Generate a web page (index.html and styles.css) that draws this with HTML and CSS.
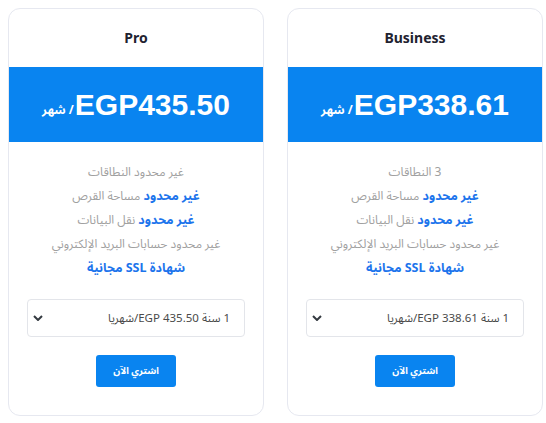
FILE: index.html
```html
<!DOCTYPE html>
<html lang="ar" dir="rtl">
<head>
<meta charset="utf-8">
<link rel="stylesheet" href="styles.css">
</head>
<body>
<div class="plans">
  <div class="card">
    <div class="card-head">Business</div>
    <div class="price"><span class="amount">EGP338.61</span><span class="per">/ شهر</span></div>
    <ul class="features">
      <li>3 النطاقات</li>
      <li><b>غير محدود</b> مساحة القرص</li>
      <li><b>غير محدود</b> نقل البيانات</li>
      <li>غير محدود حسابات البريد الإلكتروني</li>
      <li><b>شهادة SSL مجانية</b></li>
    </ul>
    <div class="select-wrap">
      <div class="select"><span>1 سنة EGP 338.61/شهريا</span>
        <svg class="chev" viewBox="0 0 10 6" width="10" height="6"><path d="M1 1l4 4 4-4" fill="none" stroke="#343a40" stroke-width="2"/></svg>
      </div>
    </div>
    <div class="btn-wrap"><button class="buy">اشتري الآن</button></div>
  </div>
  <div class="card">
    <div class="card-head">Pro</div>
    <div class="price"><span class="amount">EGP435.50</span><span class="per">/ شهر</span></div>
    <ul class="features">
      <li>غير محدود النطاقات</li>
      <li><b>غير محدود</b> مساحة القرص</li>
      <li><b>غير محدود</b> نقل البيانات</li>
      <li>غير محدود حسابات البريد الإلكتروني</li>
      <li><b>شهادة SSL مجانية</b></li>
    </ul>
    <div class="select-wrap">
      <div class="select"><span>1 سنة EGP 435.50/شهريا</span>
        <svg class="chev" viewBox="0 0 10 6" width="10" height="6"><path d="M1 1l4 4 4-4" fill="none" stroke="#343a40" stroke-width="2"/></svg>
      </div>
    </div>
    <div class="btn-wrap"><button class="buy">اشتري الآن</button></div>
  </div>
</div>
</body>
</html>
```
FILE: styles.css
```css
html, body {
  margin: 0;
  padding: 0;
  background: #fff;
}
body {
  font-family: "Noto Sans", "Noto Sans Arabic", sans-serif;
}
.plans {
  display: flex;
  gap: 23px;
  padding: 8px 3px 0 8px;
}
.card {
  width: 254px;
  height: 406px;
  border: 1px solid #e6e8f0;
  border-radius: 12px;
  display: flex;
  flex-direction: column;
  overflow: hidden;
}
.card-head {
  height: 58px;
  padding-bottom: 2px;
  box-sizing: border-box;
  display: flex;
  align-items: center;
  justify-content: center;
  font-weight: 700;
  font-size: 14px;
  color: #1f2330;
  direction: ltr;
}
.price {
  height: 75px;
  background: #0984f0;
  color: #fff;
  display: flex;
  align-items: center;
  justify-content: center;
  direction: ltr;
  font-family: "Liberation Sans", Arial, sans-serif;
  font-weight: 700;
}
.price .amount {
  font-size: 30px;
  order: 2;
}
.price .per {
  order: 1;
  font-size: 12px;
  direction: rtl;
  margin-top: 12px;
  margin-right: 1px;
  font-family: "Noto Sans", "Noto Sans Arabic", sans-serif;
}
.features {
  list-style: none;
  margin: 0;
  padding: 18px 0 0;
  text-align: center;
  font-size: 12px;
  line-height: 24px;
  color: #a0a0a0;
}
.features b {
  color: #1c74ec;
  font-weight: 700;
  font-size: 12.5px;
}
.select-wrap {
  padding: 19px 18px 0;
}
.select {
  height: 36px;
  border: 1px solid #e3e5ea;
  border-radius: 4px;
  display: flex;
  align-items: center;
  justify-content: space-between;
  padding: 0 14px 0 5px;
  font-size: 11.5px;
  color: #4a4a4a;
}
.chev {
  display: block;
}
.btn-wrap {
  padding-top: 18px;
  display: flex;
  justify-content: center;
}
.buy {
  width: 80px;
  height: 32px;
  border: none;
  border-radius: 3px;
  background: #0984f0;
  color: #fff;
  font-family: "Noto Sans", "Noto Sans Arabic", sans-serif;
  font-weight: 700;
  font-size: 9.5px;
}
```
